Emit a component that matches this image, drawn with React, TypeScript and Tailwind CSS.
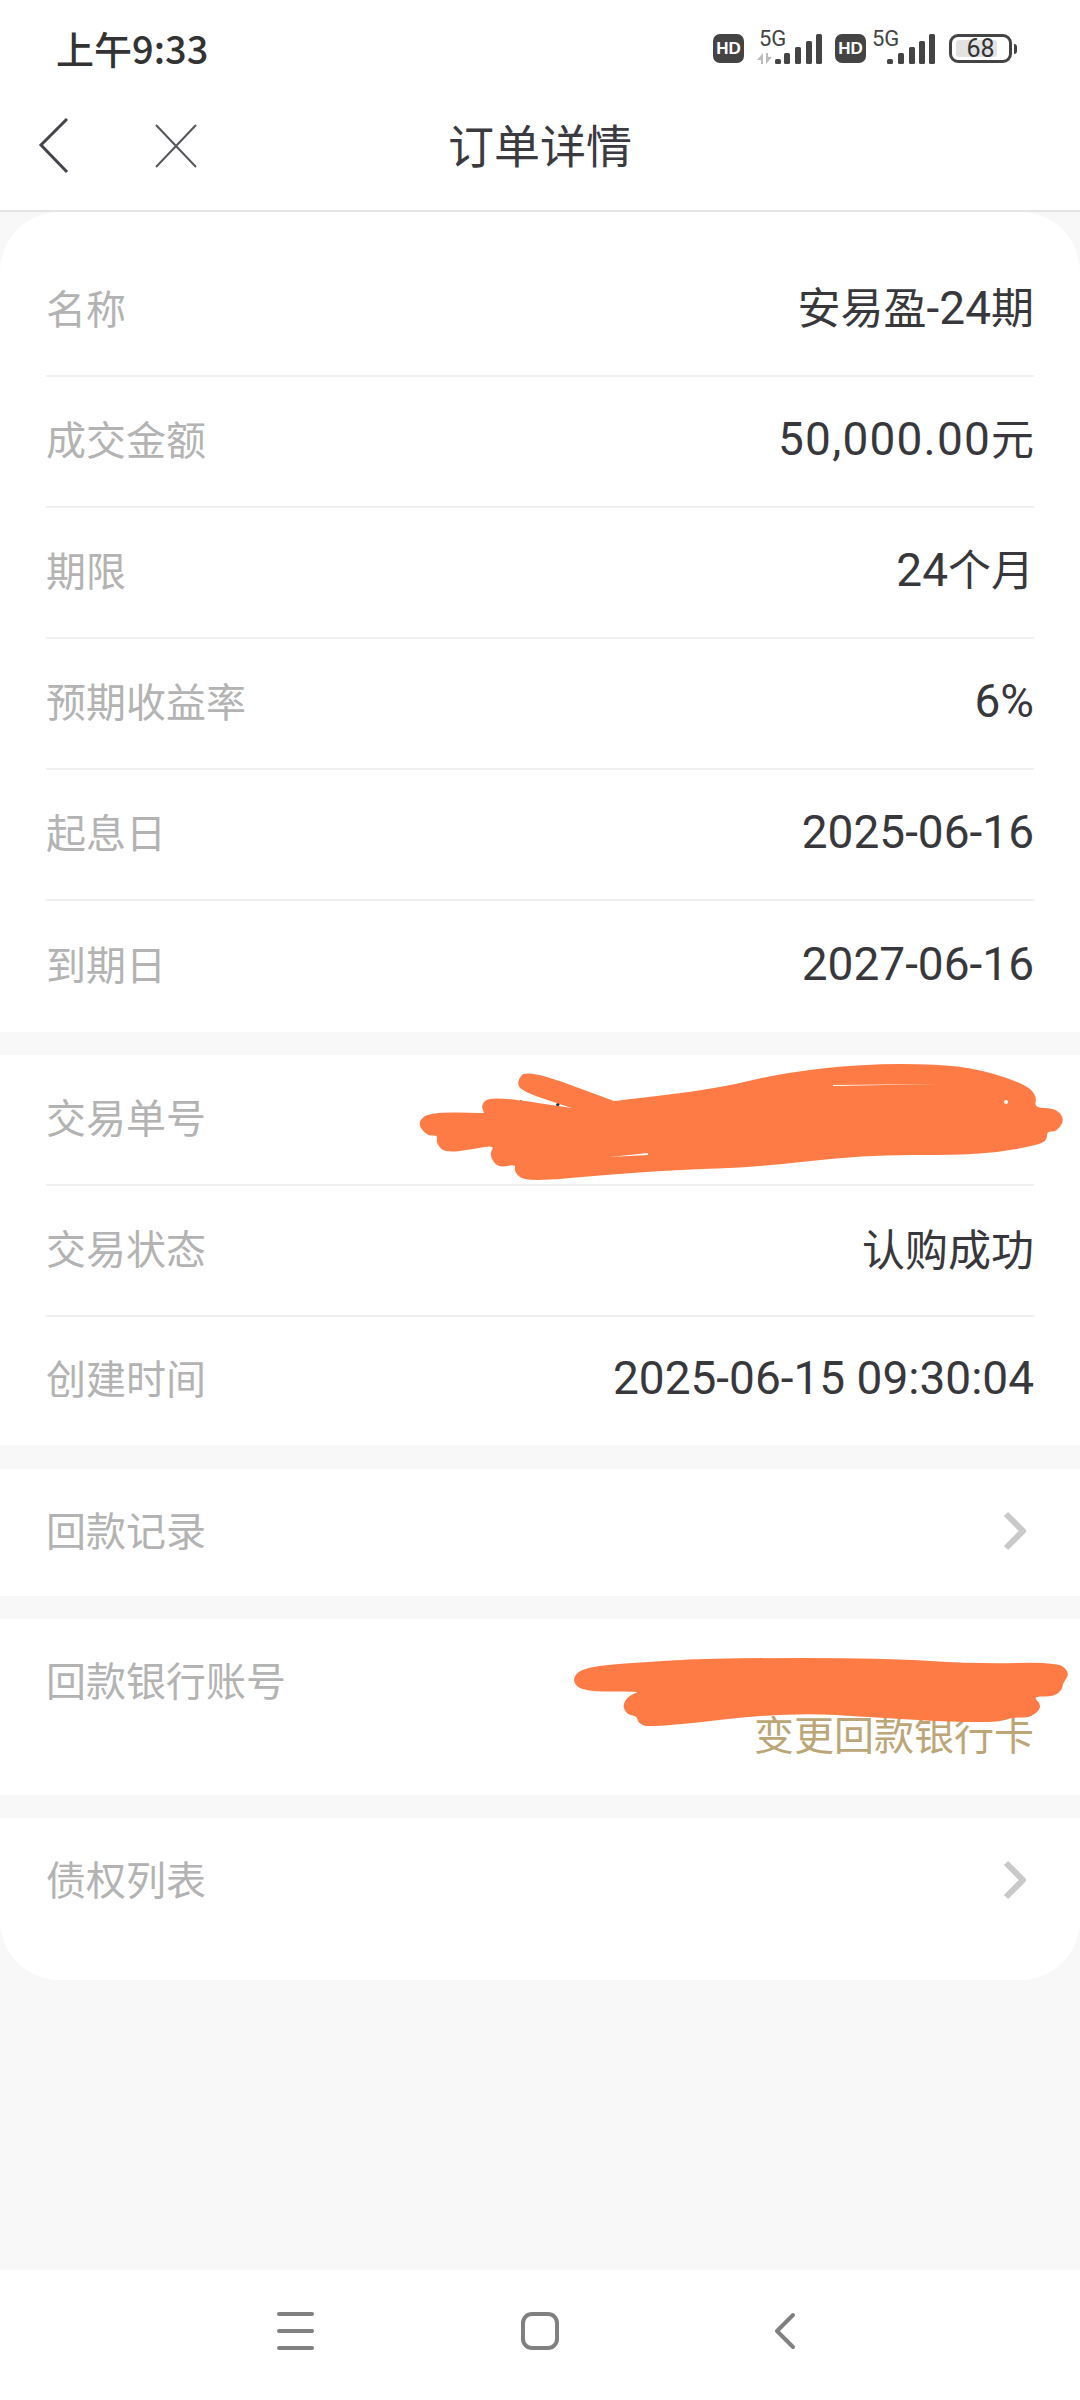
import React from 'react';

type Pt = [number, number];

// rounds a closed outline by curving through the midpoints of its edges
const smoothPath = (pts: Pt[]) => {
  const mid = (a: Pt, b: Pt): Pt => [(a[0] + b[0]) / 2, (a[1] + b[1]) / 2];
  const start = mid(pts[pts.length - 1], pts[0]);
  let d = `M${start[0]} ${start[1]}`;
  pts.forEach((p, i) => {
    const m = mid(p, pts[(i + 1) % pts.length]);
    d += ` Q${p[0]} ${p[1]} ${m[0]} ${m[1]}`;
  });
  return d + ' Z';
};

// repeated points keep the notches between strokes sharp
const orderMark: Pt[] = [
  [429, 1112], [484, 1113], [484, 1113], [481, 1104], [492, 1096], [572, 1108], [572, 1108], [523, 1092], [516, 1082], [527, 1069],
  [614, 1101], [614, 1101], [715, 1089], [782, 1073], [862, 1064], [938, 1064], [983, 1070], [1027, 1085], [1037, 1097],
  [1034, 1108], [1056, 1108], [1065, 1120], [1056, 1132], [1047, 1131], [1047, 1140], [1038, 1145],
  [1000, 1152], [960, 1155], [862, 1155], [759, 1167], [675, 1170], [603, 1175], [526, 1182], [514, 1172],
  [516, 1164], [498, 1168], [489, 1155], [495, 1145], [474, 1149], [445, 1153], [436, 1143], [438, 1135],
  [427, 1136], [417, 1123],
];

const bankMark: Pt[] = [
  [583, 1667], [643, 1662], [719, 1658], [884, 1658], [977, 1664], [1058, 1662], [1070, 1673], [1063, 1683],
  [1062, 1690], [1053, 1697], [1032, 1696], [1043, 1706], [1031, 1718], [1012, 1717], [1001, 1722], [953, 1722],
  [884, 1718], [788, 1712], [650, 1728], [638, 1723], [637, 1716], [628, 1715], [622, 1706], [629, 1695],
  [643, 1691], [583, 1692], [571, 1680],
];

const labelText = 'text-[40px] leading-none text-[#b3b3b3]';

// digits sit in Roboto at a larger size, Chinese characters in the CJK face
const Value = ({ text, spaced }: { text: string; spaced?: boolean }) => (
  <span className="flex items-baseline pt-[2px] leading-none text-[#38383c]">
    {text.split(/([\u4e00-\u9fff]+)/).filter(Boolean).map((part, i) =>
      /[\u4e00-\u9fff]/.test(part) ? (
        <span key={i} className="text-[43px]">{part}</span>
      ) : (
        <span key={i} className={`whitespace-pre text-[46px] font-['Roboto',sans-serif] ${spaced ? 'tracking-[1.2px]' : ''}`}>{part}</span>
      )
    )}
  </span>
);

type RowProps = { label: string; value?: string; last?: boolean; short?: boolean; spaced?: boolean };

const Row = ({ label, value, last, short, spaced }: RowProps) => (
  <div className={`flex items-center justify-between pb-[8px] ${short ? 'h-[128px]' : 'h-[131px]'} ${last ? '' : 'border-b-2 border-[#f0f0f0]'}`}>
    <span className={labelText}>{label}</span>
    {value && <Value text={value} spaced={spaced} />}
  </div>
);

const Chevron = () => (
  <svg className="mt-[4px]" width="28" height="40" viewBox="0 0 28 40" fill="none">
    <path d="M4 3 L21 20 L4 37" stroke="#c9c9c9" strokeWidth="6" strokeLinejoin="round" />
  </svg>
);

const LinkRow = ({ label, className }: { label: string; className: string }) => (
  <div className={`flex items-center justify-between bg-white pb-[8px] pl-[46px] pr-[50px] ${className}`}>
    <span className={labelText}>{label}</span>
    <Chevron />
  </div>
);

const Signal = ({ arrows, bars }: { arrows?: boolean; bars: number[] }) => (
  <svg width="66" height="46" viewBox="0 0 66 46" fill="#444444">
    <text x={arrows ? 2 : 0} y="27" fontSize="22" fontFamily="Roboto, sans-serif" fill="#444444">5G</text>
    {arrows && (
      <g fill="#bdbdbd">
        <path d="M0 41 L6 34 L6 45 L4 45 L4 41 Z" />
        <path d="M9 34 L11 34 L11 38 L15 38 L9 45 Z" />
      </g>
    )}
    <rect x={bars[0]} y="40" width="6" height="5" rx="1.5" />
    <rect x={bars[1]} y="34" width="6" height="11" rx="1.5" />
    <rect x={bars[2]} y="28" width="6" height="17" rx="1.5" />
    <rect x={bars[3]} y="22" width="6" height="23" rx="1.5" />
    <rect x={bars[4]} y="15" width="6" height="30" rx="1.5" />
  </svg>
);

const HdBadge = () => (
  <span className="mb-[2px] flex h-[29px] w-[31px] items-center justify-center rounded-[7px] bg-[#444444] text-[17px] font-bold leading-none text-white font-['Liberation_Sans',sans-serif]">
    HD
  </span>
);

const StatusBar = () => (
  <div className="flex h-[100px] items-start justify-between bg-white pl-[56px] pr-[63px]">
    <span className="mt-[29px] text-[38px] leading-none font-medium text-[#333333]">上午9:33</span>
    <div className="mt-[19px] flex items-end">
      <HdBadge />
      <div className="ml-[13px]">
        <Signal arrows bars={[18, 27, 38, 49, 59]} />
      </div>
      <div className="ml-[12px]">
        <HdBadge />
      </div>
      <div className="ml-[6px]">
        <Signal bars={[15, 26, 37, 47, 57]} />
      </div>
      <div className="relative mb-[2px] ml-[11px] flex h-[29px] w-[63px] items-center justify-center rounded-[9px] border-[3px] border-[#444444]">
        <div className="absolute left-[4px] top-[3px] bottom-[3px] w-[41px] rounded-[3px] bg-[#e2e2e2]" />
        <span className="relative text-[25px] leading-none text-[#333333] font-['Roboto',sans-serif]">68</span>
      </div>
      <div className="mb-[11px] ml-[2px] h-[10px] w-[3px] rounded-r-full bg-[#444444]" />
    </div>
  </div>
);

const NavBar = () => (
  <div className="relative flex h-[112px] items-start justify-center border-b-2 border-[#e4e4e4] bg-white pt-[19px]">
    <svg className="absolute left-[36px] top-[15px]" width="36" height="60" viewBox="0 0 36 60" fill="none">
      <path d="M31 4 L5 30 L31 57" stroke="#44444c" strokeWidth="3" />
    </svg>
    <svg className="absolute left-[153px] top-[23px]" width="46" height="46" viewBox="0 0 46 46" fill="none">
      <path d="M3 2 L43 44 M43 2 L3 44" stroke="#55555c" strokeWidth="2" />
    </svg>
    <span className="text-[46px] leading-[48px] text-[#3a3a40]">订单详情</span>
  </div>
);

const BottomBar = () => (
  <div className="flex h-[130px] items-start justify-center bg-white pt-[42px]">
    <div className="flex w-[245px] justify-center">
      <div className="flex h-[38px] w-[37px] flex-col justify-between">
        <div className="h-[4px] rounded-full bg-[#808080]" />
        <div className="h-[4px] rounded-full bg-[#808080]" />
        <div className="h-[4px] rounded-full bg-[#808080]" />
      </div>
    </div>
    <div className="flex w-[245px] justify-center">
      <div className="h-[38px] w-[38px] rounded-[11px] border-[4px] border-[#808080]" />
    </div>
    <div className="flex w-[245px] justify-center">
      <svg width="22" height="38" viewBox="0 0 22 38" fill="none">
        <path d="M19 3 L3 19 L19 35" stroke="#808080" strokeWidth="4" strokeLinecap="round" strokeLinejoin="round" />
      </svg>
    </div>
  </div>
);

const App = () => (
  <div className="relative flex h-[2400px] w-[1080px] flex-col overflow-hidden bg-[#f8f8f8] font-['Noto_Sans_CJK_SC','Noto_Sans',sans-serif]">
    <StatusBar />
    <NavBar />

    <main className="flex flex-1 flex-col">
      <div className="overflow-hidden rounded-[60px]">
        <section className="bg-white px-[46px] pt-[34px]">
          <Row label="名称" value="安易盈-24期" />
          <Row label="成交金额" value="50,000.00元" spaced />
          <Row label="期限" value="24个月" />
          <Row label="预期收益率" value="6%" />
          <Row label="起息日" value="2025-06-16" />
          <Row label="到期日" value="2027-06-16" last />
        </section>

        <section className="mt-[23px] bg-white px-[46px]">
          <Row label="交易单号" />
          <Row label="交易状态" value="认购成功" />
          <Row label="创建时间" value="2025-06-15 09:30:04" last short />
        </section>

        <LinkRow label="回款记录" className="mt-[24px] h-[127px]" />

        <section className="mt-[23px] flex h-[176px] justify-between bg-white px-[46px] pt-[40px]">
          <span className={labelText}>回款银行账号</span>
          <span className="mt-[54px] text-[40px] leading-none text-[#bca677]">变更回款银行卡</span>
        </section>

        <LinkRow label="债权列表" className="mt-[23px] h-[128px]" />
        <div className="h-[34px] bg-white" />
      </div>
    </main>

    <BottomBar />

    {/* hand-drawn marker strokes over the two redacted values */}
    <svg className="pointer-events-none absolute left-0 top-0" width="1080" height="2400" viewBox="0 0 1080 2400">
      <path d="M520 1103 l2 -2 M557 1106 l3 -5" stroke="#333333" strokeWidth="3" />
      <path d={smoothPath(orderMark)} fill="#ff7b45" />
      <path d="M833 1085 L940 1084 L833 1086 Z" fill="#ffffff" />
      <path d="M610 1157 L648 1153 L648 1155 Z" fill="#ffffff" />
      <circle cx="1006" cy="1102" r="2" fill="#ffffff" />
      <path d={smoothPath(bankMark)} fill="#ff7b45" />
    </svg>
  </div>
);

export default App;
